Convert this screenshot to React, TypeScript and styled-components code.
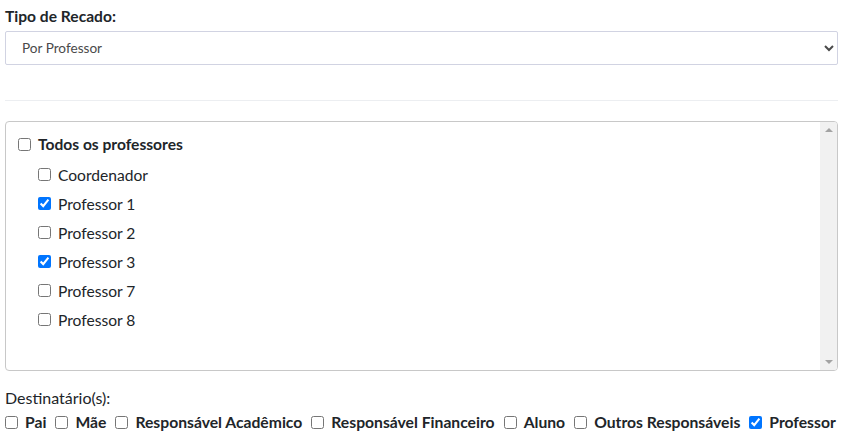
import React from "react";
import styled, { createGlobalStyle } from "styled-components";

const Global = createGlobalStyle`
  html, body { margin: 0; padding: 0; background: #fff; }
  body { font-family: Lato, "Noto Sans", sans-serif; color: #212529; }
  * { box-sizing: border-box; }
`;

const Page = styled.div`
  padding: 6px 17px 0 5px;
  display: flex;
  flex-direction: column;
`;

const FieldLabel = styled.label`
  font-size: 15.6px;
  font-weight: 700;
  line-height: 20px;
  color: #212529;
  display: block;
`;

const Select = styled.select`
  margin-top: 5px;
  width: 100%;
  height: 34px;
  border: 1px solid #d1d3e2;
  border-radius: 2px;
  background: #fff;
  font-family: Lato, "Noto Sans", sans-serif;
  font-size: 13.6px;
  color: #4a4a4a;
  padding: 0 12px;
`;

const Rule = styled.hr`
  border: 0;
  border-top: 1px solid #eceef1;
  margin: 35px 0 20px;
`;

const ListBox = styled.div`
  height: 250px;
  border: 1px solid #c8c8c8;
  border-radius: 4px;
  display: flex;
  overflow: hidden;
`;

const ListContent = styled.div`
  flex: 1;
  padding: 11px 12px;
`;

const ScrollTrack = styled.div`
  width: 17px;
  flex: none;
  background: #f1f1f1;
  display: flex;
  flex-direction: column;
  justify-content: space-between;
  align-items: center;
  padding: 6px 0;
`;

const Arrow = styled.span<{ $down?: boolean }>`
  width: 0;
  height: 0;
  border-left: 4px solid transparent;
  border-right: 4px solid transparent;
  ${(p) =>
    p.$down
      ? "border-top: 4px solid #a3a3a3;"
      : "border-bottom: 4px solid #a3a3a3;"}
`;

const Row = styled.label<{ $indent?: boolean; $bold?: boolean }>`
  display: flex;
  align-items: center;
  gap: 7px;
  height: 29px;
  padding-left: ${(p) => (p.$indent ? 20 : 0)}px;
  font-size: 15.6px;
  font-weight: ${(p) => (p.$bold ? 700 : 400)};
  color: #212529;
  &:first-child { height: 22px; margin-bottom: 5px; }
`;

const Box = styled.input`
  margin: 0;
  width: 13px;
  height: 13px;
  flex: none;
`;

const DestLabel = styled.div`
  margin-top: 17px;
  font-size: 16px;
  color: #212529;
  line-height: 20px;
`;

const DestRow = styled.div`
  display: flex;
  align-items: center;
  flex-wrap: nowrap;
  white-space: nowrap;
  gap: 9px;
  margin-top: 5px;
`;

const DestItem = styled.label`
  display: flex;
  align-items: center;
  flex: none;
  gap: 7px;
  font-size: 15.7px;
  font-weight: 700;
  color: #212529;
`;

const profs = [
  { name: "Coordenador", checked: false },
  { name: "Professor 1", checked: true },
  { name: "Professor 2", checked: false },
  { name: "Professor 3", checked: true },
  { name: "Professor 7", checked: false },
  { name: "Professor 8", checked: false },
];

const dest = [
  { name: "Pai", checked: false },
  { name: "Mãe", checked: false },
  { name: "Responsável Acadêmico", checked: false },
  { name: "Responsável Financeiro", checked: false },
  { name: "Aluno", checked: false },
  { name: "Outros Responsáveis", checked: false },
  { name: "Professor", checked: true },
];

export default function App() {
  return (
    <Page>
      <Global />
      <FieldLabel>Tipo de Recado:</FieldLabel>
      <Select defaultValue="prof">
        <option value="prof">Por Professor</option>
      </Select>
      <Rule />
      <ListBox>
        <ListContent>
          <Row $bold>
            <Box type="checkbox" />
            Todos os professores
          </Row>
          {profs.map((p) => (
            <Row key={p.name} $indent>
              <Box type="checkbox" defaultChecked={p.checked} />
              {p.name}
            </Row>
          ))}
        </ListContent>
        <ScrollTrack>
          <Arrow />
          <Arrow $down />
        </ScrollTrack>
      </ListBox>
      <DestLabel>Destinatário(s):</DestLabel>
      <DestRow>
        {dest.map((d) => (
          <DestItem key={d.name}>
            <Box type="checkbox" defaultChecked={d.checked} />
            {d.name}
          </DestItem>
        ))}
      </DestRow>
    </Page>
  );
}
